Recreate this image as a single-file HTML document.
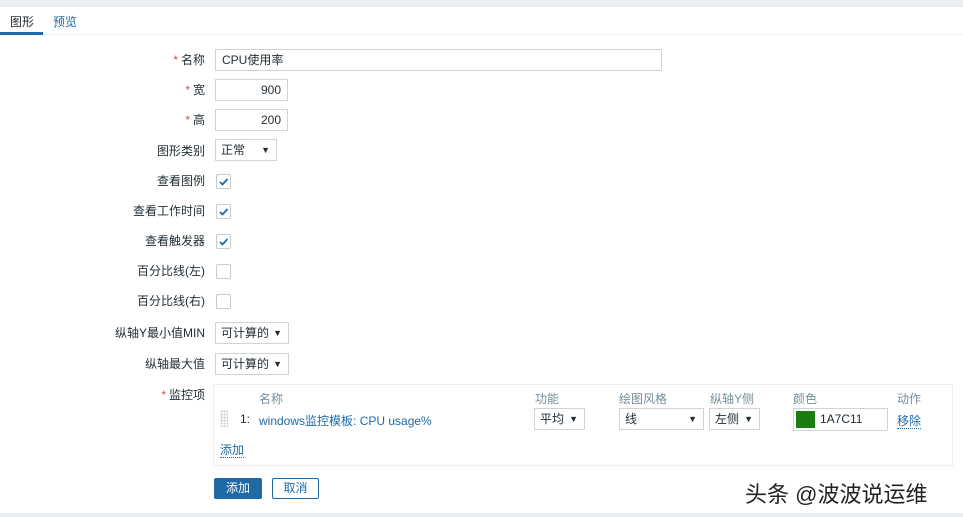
<!DOCTYPE html>
<html><head><meta charset="utf-8"><style>
*{box-sizing:border-box;margin:0;padding:0}
body{width:963px;height:517px;background:#fff;position:relative;overflow:hidden;font-family:"Liberation Sans","Noto Sans CJK SC",sans-serif;font-size:12px;color:#1f2c33}
.a{position:absolute}
.lbl{position:absolute;right:758px;text-align:right;white-space:nowrap;line-height:14px}
.req{color:#d64e4e;margin-right:3px}
.in{position:absolute;border:1px solid #cfd4d7;background:#fff;line-height:20px;padding:0 6px;white-space:nowrap}
.sel{position:absolute;border:1px solid #cfd4d7;background:#fff;line-height:20px;padding:0 5px;white-space:nowrap}
.sel:after{content:"▼";position:absolute;right:6px;top:0;font-size:9px}
.cb{position:absolute;left:216px;width:15px;height:15px;border:1px solid #c6ccd0;background:#fff;border-radius:2px}
.cb svg{position:absolute;left:1px;top:1px}
.hd{position:absolute;color:#768d99;top:390px}
a{color:#1f6aa5;text-decoration:none}
</style></head><body>
<div class="a" style="left:0;top:0;width:963px;height:7px;background:#ebeef0"></div>
<div class="a" style="left:0;top:34px;width:963px;height:1px;background:#f0f2f3"></div>
<div class="a" style="left:10px;top:13px;color:#1f2c33">图形</div>
<div class="a" style="left:53px;top:13px;color:#1f6aa5">预览</div>
<div class="a" style="left:0;top:32px;width:43px;height:3px;background:#1f6aa5"></div>

<div class="lbl" style="top:53px"><span class="req">*</span>名称</div>
<div class="in" style="left:215px;top:49px;width:447px;height:22px">CPU使用率</div>
<div class="lbl" style="top:83px"><span class="req">*</span>宽</div>
<div class="in" style="left:215px;top:79px;width:73px;height:22px;text-align:right">900</div>
<div class="lbl" style="top:113px"><span class="req">*</span>高</div>
<div class="in" style="left:215px;top:109px;width:73px;height:22px;text-align:right">200</div>
<div class="lbl" style="top:144px">图形类别</div>
<div class="sel" style="left:215px;top:139px;width:62px;height:22px">正常</div>

<div class="lbl" style="top:174px">查看图例</div>
<div class="cb" style="top:174px"><svg width="11" height="11"><path d="M2 6 L4.5 8.5 L9.5 3" stroke="#1f6aa5" stroke-width="1.8" fill="none"/></svg></div>
<div class="lbl" style="top:204px">查看工作时间</div>
<div class="cb" style="top:204px"><svg width="11" height="11"><path d="M2 6 L4.5 8.5 L9.5 3" stroke="#1f6aa5" stroke-width="1.8" fill="none"/></svg></div>
<div class="lbl" style="top:234px">查看触发器</div>
<div class="cb" style="top:234px"><svg width="11" height="11"><path d="M2 6 L4.5 8.5 L9.5 3" stroke="#1f6aa5" stroke-width="1.8" fill="none"/></svg></div>
<div class="lbl" style="top:264px">百分比线(左)</div>
<div class="cb" style="top:264px"></div>
<div class="lbl" style="top:294px">百分比线(右)</div>
<div class="cb" style="top:294px"></div>

<div class="lbl" style="top:326px">纵轴Y最小值MIN</div>
<div class="sel" style="left:215px;top:322px;width:74px;height:22px">可计算的</div>
<div class="lbl" style="top:357px">纵轴最大值</div>
<div class="sel" style="left:215px;top:353px;width:74px;height:22px">可计算的</div>

<div class="lbl" style="top:388px"><span class="req">*</span>监控项</div>
<div class="a" style="left:213px;top:384px;width:740px;height:82px;border:1px solid #eceff1"></div>
<div class="hd" style="left:259px">名称</div>
<div class="hd" style="left:535px">功能</div>
<div class="hd" style="left:619px">绘图风格</div>
<div class="hd" style="left:710px">纵轴Y侧</div>
<div class="hd" style="left:793px">颜色</div>
<div class="hd" style="left:897px">动作</div>
<div class="a" style="left:220px;top:410px;width:8px;height:17px;background-image:radial-gradient(circle,#c5ccd0 1px,transparent 1.2px);background-size:3px 3px"></div>
<div class="a" style="left:240px;top:412px">1:</div>
<div class="a" style="left:259px;top:412px"><a>windows监控模板: CPU usage%</a></div>
<div class="sel" style="left:534px;top:408px;width:51px;height:22px">平均</div>
<div class="sel" style="left:619px;top:408px;width:85px;height:22px">线</div>
<div class="sel" style="left:709px;top:408px;width:51px;height:22px">左侧</div>
<div class="in" style="left:793px;top:408px;width:95px;height:23px;padding-left:26px;line-height:21px">1A7C11</div>
<div class="a" style="left:796px;top:411px;width:19px;height:17px;background:#1a7c11"></div>
<div class="a" style="left:897px;top:412px"><a style="border-bottom:1px dotted #1f6aa5">移除</a></div>
<div class="a" style="left:220px;top:441px"><a style="border-bottom:1px dotted #1f6aa5">添加</a></div>

<div class="a" style="left:214px;top:478px;width:48px;height:21px;background:#1f6aa5;border-radius:2px;color:#fff;text-align:center;line-height:21px">添加</div>
<div class="a" style="left:272px;top:478px;width:47px;height:21px;border:1px solid #1f6aa5;border-radius:2px;color:#1f6aa5;text-align:center;line-height:19px">取消</div>

<div class="a" style="left:745px;top:477px;font-size:22px;color:#222;text-shadow:0 0 2px #fff">头条 @波波说运维</div>
<div class="a" style="left:0;top:513px;width:963px;height:4px;background:#ebeef0"></div>
</body></html>
